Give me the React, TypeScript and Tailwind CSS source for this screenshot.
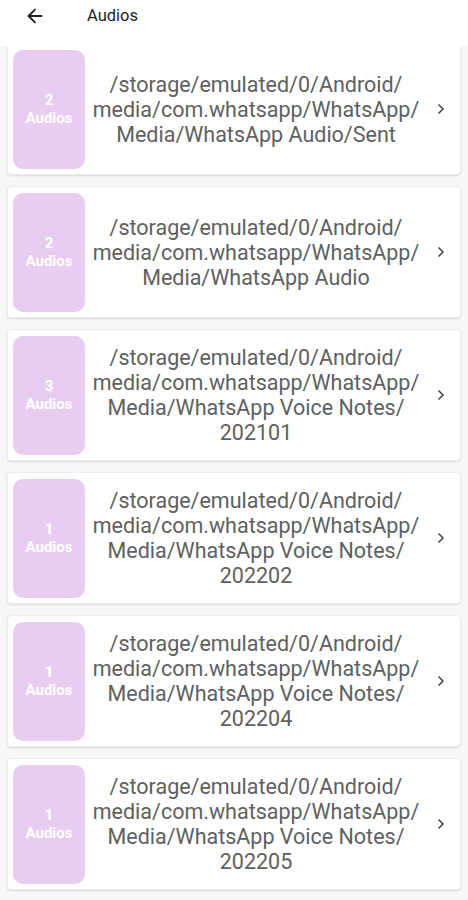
import { ArrowLeft, ChevronRight } from "lucide-react";

const folders = [
  { count: 2, path: ["/storage/emulated/0/Android/", "media/com.whatsapp/WhatsApp/", "Media/WhatsApp Audio/Sent"] },
  { count: 2, path: ["/storage/emulated/0/Android/", "media/com.whatsapp/WhatsApp/", "Media/WhatsApp Audio"] },
  { count: 3, path: ["/storage/emulated/0/Android/", "media/com.whatsapp/WhatsApp/", "Media/WhatsApp Voice Notes/", "202101"] },
  { count: 1, path: ["/storage/emulated/0/Android/", "media/com.whatsapp/WhatsApp/", "Media/WhatsApp Voice Notes/", "202202"] },
  { count: 1, path: ["/storage/emulated/0/Android/", "media/com.whatsapp/WhatsApp/", "Media/WhatsApp Voice Notes/", "202204"] },
  { count: 1, path: ["/storage/emulated/0/Android/", "media/com.whatsapp/WhatsApp/", "Media/WhatsApp Voice Notes/", "202205"] },
];

export default function App() {
  return (
    <div className="h-[900px] w-[468px] overflow-hidden bg-[#f7f7f7] font-['Roboto',sans-serif]">
      {/* Top bar */}
      <div className="relative z-10 flex h-[46px] items-start bg-white pt-[5px]">
        <button type="button" className="ml-[23px] flex h-[22px] w-6 items-center justify-center text-[#1f1f1f]" aria-label="Back">
          <ArrowLeft className="h-[22px] w-[22px]" strokeWidth={2} />
        </button>
        <span className="ml-[40px] text-[16.5px] leading-[22px] text-[#222]">Audios</span>
      </div>

      {/* Folder list */}
      <div className="-mt-[3px] flex flex-col gap-[11px] px-[7px]">
        {folders.map((f, i) => (
          <div
            key={i}
            className="flex h-[132px] items-center rounded-[4px] border border-[#ececec] bg-white pl-[5px] pr-[11px] shadow-[0_1px_2px_rgba(0,0,0,0.12)]"
          >
            <div className="flex h-[119px] w-[72px] shrink-0 flex-col items-center justify-center rounded-[10px] bg-[#e9cdf1] text-[15px] font-bold leading-[18px] text-white">
              <span>{f.count}</span>
              <span>Audios</span>
            </div>
            <div className="ml-[3px] mr-[9px] flex-1 whitespace-nowrap text-center text-[21.5px] leading-[25px] text-[#606060]">
              {f.path.map((line, j) => (
                <div key={j}>{line}</div>
              ))}
            </div>
            <ChevronRight className="h-4 w-4 shrink-0 text-[#444]" strokeWidth={2.5} />
          </div>
        ))}
      </div>
    </div>
  );
}
